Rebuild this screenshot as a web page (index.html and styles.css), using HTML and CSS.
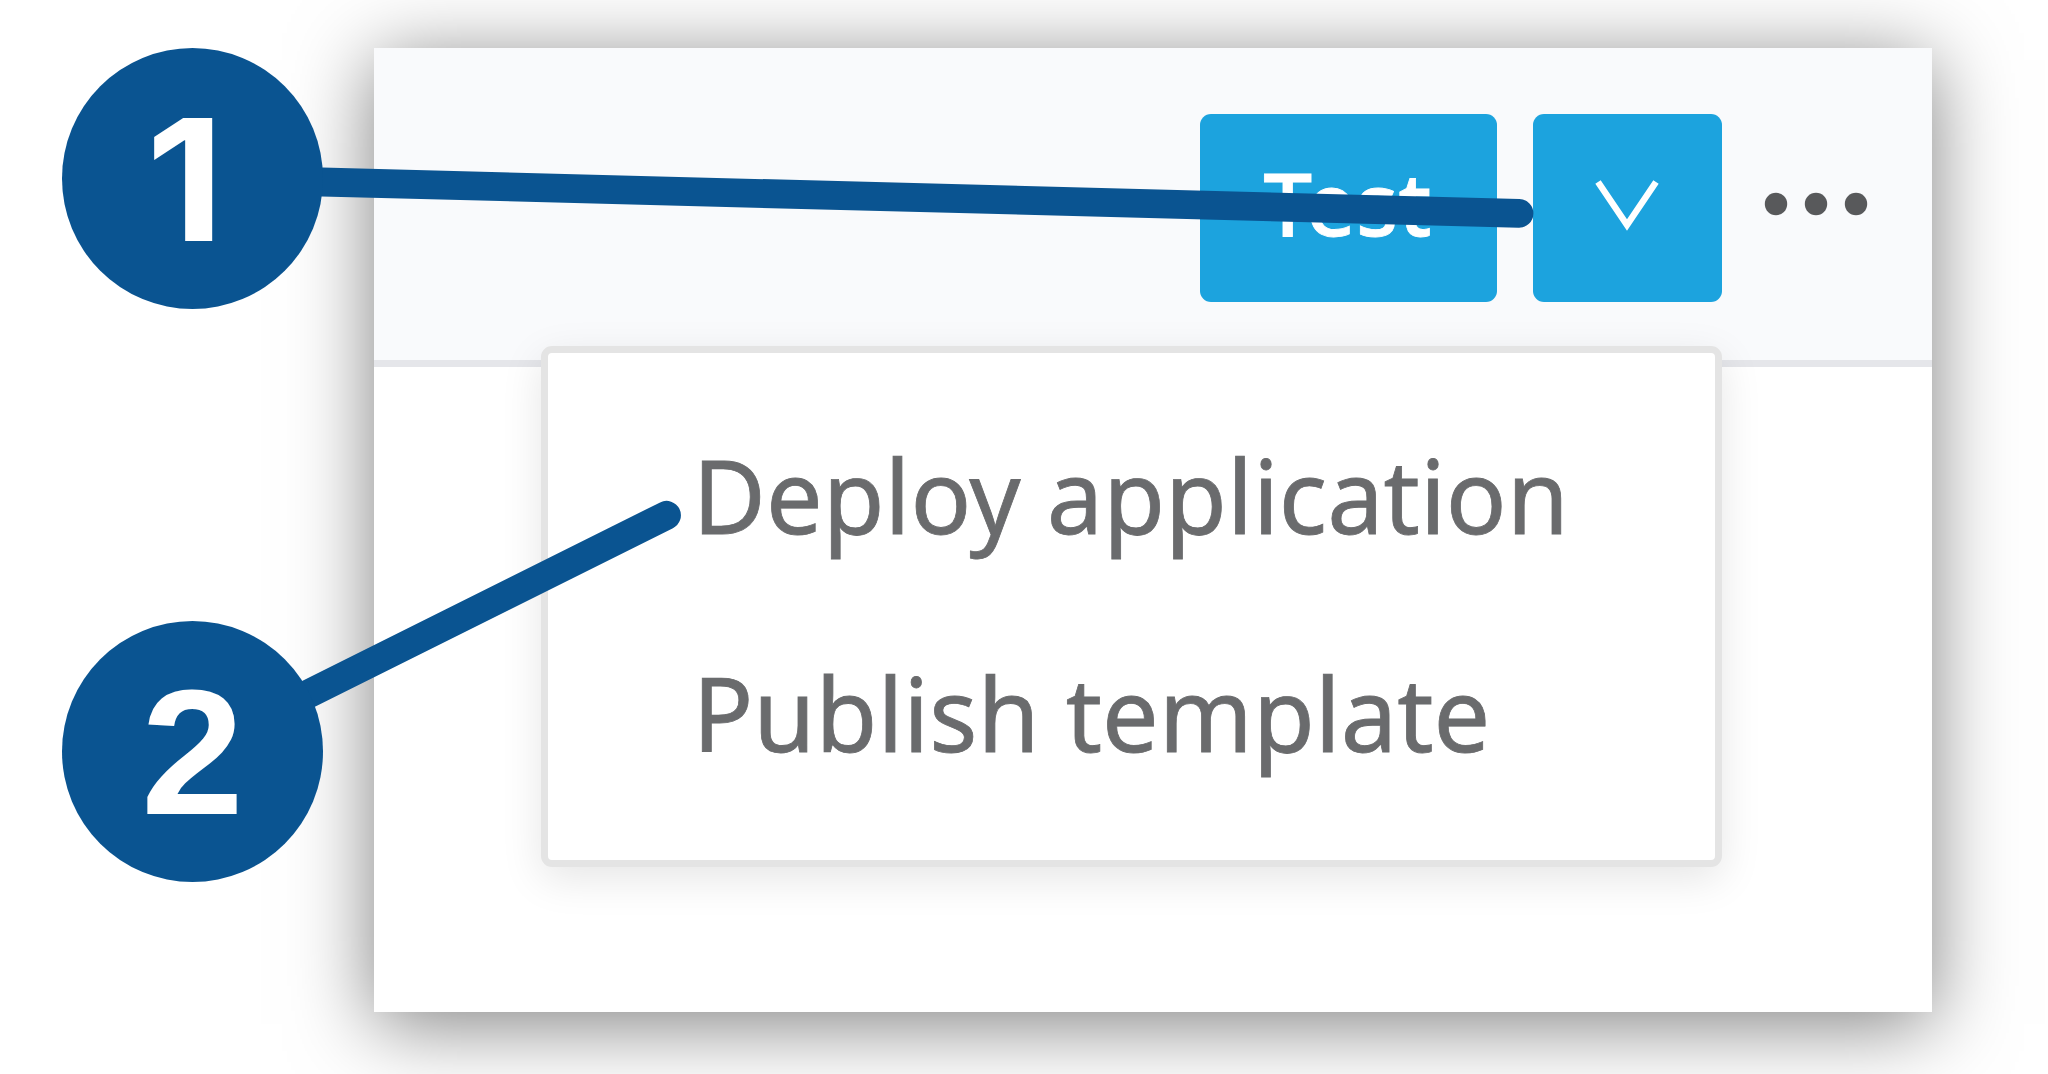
FILE: index.html
```html
<!DOCTYPE html>
<html lang="en">
<head>
<meta charset="utf-8">
<title>Deploy application</title>
<link rel="stylesheet" href="styles.css">
</head>
<body>
<main class="figure">
  <section class="panel">
    <header class="toolbar">
      <button class="btn btn-test"><span class="btn-label">Test</span></button>
      <button class="btn btn-toggle" aria-label="More actions">
        <svg class="chevron" viewBox="0 0 70 56"><path d="M6 6 35 49 64 6"/></svg>
      </button>
      <svg class="dots" viewBox="0 0 104 24"><circle cx="12" cy="12" r="11.2"/><circle cx="52" cy="12" r="11.2"/><circle cx="92" cy="12" r="11.2"/></svg>
    </header>
    <ul class="menu">
      <li class="menu-item"><span class="menu-text">Deploy application</span></li>
      <li class="menu-item"><span class="menu-text">Publish template</span></li>
    </ul>
  </section>
  <svg class="leaders" viewBox="0 0 2048 1074">
    <path d="M192 179 322 182 1519 213.3"/>
    <path d="M250 723 308.5 693.8 666.5 515.3"/>
  </svg>
  <div class="marker marker-one"><span class="digit digit-one">1</span></div>
  <div class="marker marker-two"><span class="digit digit-two">2</span></div>
</main>
</body>
</html>
```
FILE: styles.css
```css
* { box-sizing: border-box; }
body { margin: 0; background: #fff; }
.figure {
  position: relative;
  width: 2048px;
  height: 1074px;
  padding: 48px 116px 62px 373.5px;
  overflow: hidden;
}
.panel {
  position: relative;
  height: 964px;
  background: #fff;
  box-shadow: 0 12px 76px rgba(0, 0, 0, .5);
}
.toolbar {
  display: flex;
  align-items: flex-start;
  justify-content: flex-end;
  height: 319px;
  padding: 65.5px 64px 0 0;
  background: #f9fafc;
  border-bottom: 7px solid #e5e6ea;
}
.btn {
  display: flex;
  align-items: center;
  justify-content: center;
  height: 188.5px;
  padding: 0;
  border: 0;
  border-radius: 11px;
  background: #1ca3de;
  color: #fff;
}
.btn-test { width: 297px; margin-right: 36px; }
.btn-toggle { width: 188.5px; margin-right: 42.5px; }
.btn-label {
  padding: 0 2px 11px 0;
  font: 500 87px/118px "Noto Sans", "Open Sans", sans-serif;
  -webkit-text-stroke: .8px #fff;
}
.chevron {
  width: 70px;
  height: 56px;
  margin-bottom: 7px;
  fill: none;
  stroke: #fff;
  stroke-width: 6.5;
}
.dots { width: 104px; height: 24px; margin-top: 78.5px; fill: #58595b; }
.menu {
  position: absolute;
  top: 298px;
  left: 167.5px;
  width: 1181px;
  height: 521px;
  margin: 0;
  padding: 32px 0 0 144.5px;
  list-style: none;
  background: #fff;
  border: 7px solid #e4e4e4;
  border-radius: 11px;
  box-shadow: 0 12px 42px rgba(0, 0, 0, .1);
}
.menu-item { display: flex; align-items: center; height: 218px; }
.menu-text {
  color: #6a6b6d;
  font: 400 100.6px/136px "Noto Sans", "Open Sans", sans-serif;
  -webkit-text-stroke: .8px #6a6b6d;
  white-space: nowrap;
  transform: scaleY(1.02);
}
.leaders {
  position: absolute;
  inset: 0;
  width: 2048px;
  height: 1074px;
  fill: none;
  stroke: #0a5491;
  stroke-width: 28.8;
  stroke-linecap: round;
}
.marker {
  position: absolute;
  left: 61.5px;
  display: flex;
  align-items: center;
  justify-content: center;
  width: 261px;
  height: 261px;
  border-radius: 50%;
  background: #0a5491;
  color: #fff;
}
.marker-one { top: 48px; }
.marker-two { top: 621px; }
.digit { font: 700 178px/200px "Liberation Sans", Arial, sans-serif; }
.digit-one {
  padding: 2px 14px 0 0;
  font: 700 169px/200px Inter, "Liberation Sans", sans-serif;
  transform: scaleX(1.07);
}
.digit-two { padding-top: 2px; transform: scaleX(1.04); }
```
